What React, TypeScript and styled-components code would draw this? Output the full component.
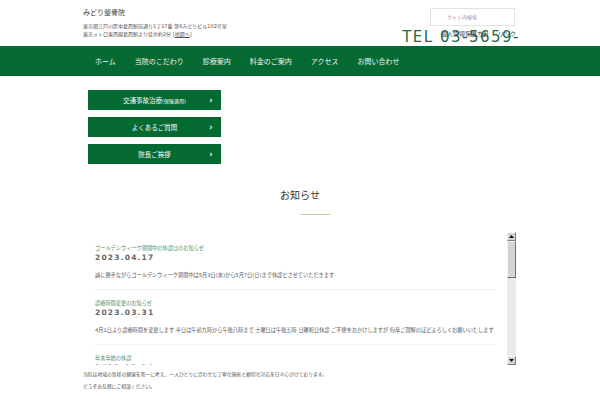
import React from "react";
import styled, { createGlobalStyle } from "styled-components";

const GREEN = "#056932";

const GlobalStyle = createGlobalStyle`
  html, body {
    margin: 0;
    padding: 0;
    background: #ffffff;
  }
  body {
    font-family: "DejaVu Sans", "Noto Sans CJK JP", sans-serif;
    color: #555;
  }
  * {
    box-sizing: border-box;
  }
`;

const Page = styled.div`
  width: 600px;
  height: 400px;
  overflow: hidden;
`;

const Container = styled.div`
  width: 434px;
  margin: 0 auto;
`;

const Header = styled(Container)`
  height: 46px;
  display: flex;
  justify-content: space-between;
`;

const Brand = styled.div`
  padding-top: 9px;
`;

const SiteName = styled.h1`
  margin: 0;
  font-size: 7px;
  line-height: 8px;
  font-weight: normal;
  color: #444;
`;

const Address = styled.p`
  margin: 5px 0 0;
  font-size: 5px;
  line-height: 8px;
  color: #555;

  a {
    color: #555;
    text-decoration: underline;
  }
`;

const HeaderRight = styled.div`
  display: flex;
  flex-direction: column;
  align-items: flex-end;
  padding-top: 8px;
`;

const SearchInput = styled.input`
  width: 85px;
  height: 18px;
  margin-right: 2px;
  border: 1px solid #e3e3e3;
  padding: 0 0 0 16px;
  font-family: inherit;
  font-size: 5px;
  outline: none;

  &::placeholder {
    color: #999;
  }
`;

const TelBlock = styled.div`
  position: relative;
  margin-top: 4px;
  margin-right: -3px;
`;

const Tel = styled.div`
  font-size: 15px;
  line-height: 15px;
  letter-spacing: 1.5px;
  color: #1f6a45;
`;

const HeaderLinks = styled.div`
  position: absolute;
  right: 4px;
  top: 1px;
  display: flex;
  gap: 9px;
  font-size: 6px;
  line-height: 6px;
  color: #444;
`;

const NavBar = styled.nav`
  height: 30px;
  background: ${GREEN};
`;

const NavList = styled(Container)`
  height: 100%;
  display: flex;
  align-items: center;
  gap: 19px;
  padding-left: 12px;
`;

const NavItem = styled.span`
  font-size: 7px;
  color: #f2f2f2;
`;

const ButtonList = styled.div`
  display: flex;
  flex-direction: column;
  gap: 7px;
  padding: 14px 0 0 5px;
`;

const SideButton = styled.div`
  width: 133px;
  height: 20px;
  background: ${GREEN};
  color: #fff;
  display: grid;
  grid-template-columns: 20px 1fr 20px;
  align-items: center;
  font-size: 6.5px;
`;

const ButtonLabel = styled.span`
  text-align: center;

  small {
    font-size: 5px;
  }
`;

const Chevron = styled.span`
  text-align: center;
  font-size: 8px;
  font-weight: bold;
`;

const SectionHead = styled.div`
  display: flex;
  flex-direction: column;
  align-items: center;
  margin-top: 25px;
`;

const SectionTitle = styled.h2`
  margin: 0;
  font-size: 10px;
  line-height: 14px;
  font-weight: normal;
  color: #333;
`;

const TitleRule = styled.div`
  width: 30px;
  height: 1px;
  margin: 11px 0 0 30px;
  background: #cdc8a4;
`;

const NewsBox = styled.div`
  margin: 17px 0 0 5px;
  width: 428px;
  height: 133px;
  display: flex;
`;

const NewsList = styled.div`
  flex: 1;
  overflow: hidden;
  padding-top: 3px;
`;

const ScrollBar = styled.div`
  width: 9px;
  display: flex;
  flex-direction: column;
  background: #ebebe6;
`;

const ScrollButton = styled.div`
  height: 9px;
  display: flex;
  align-items: center;
  justify-content: center;
  background: #d7d4cf;
  border: 1px solid #7d7d7d;
  border-top-color: #f6f6f6;
  border-left-color: #f6f6f6;
`;

const ScrollThumb = styled.div`
  height: 37px;
  background: #d7d4cf;
  border: 1px solid #6f6f6f;
  border-top-color: #f6f6f6;
  border-left-color: #f6f6f6;
`;

const ScrollTrack = styled.div`
  flex: 1;
`;

const NewsItem = styled.div`
  margin: 0 11px 0 7px;
  padding: 8px 0 9px;
  border-bottom: 1px solid #f0f0f0;
`;

const NewsTitle = styled.div`
  font-size: 5.2px;
  line-height: 10px;
  color: #4a8a68;
`;

const NewsDate = styled.div`
  font-size: 7.5px;
  line-height: 10px;
  font-weight: bold;
  letter-spacing: 1.2px;
  color: #666;
`;

const NewsBody = styled.div`
  margin-top: 7px;
  font-size: 5.2px;
  line-height: 10px;
  white-space: nowrap;
  overflow: hidden;
  color: #555;
`;

const Footer = styled(Container)`
  margin-top: 4px;
  font-size: 4.8px;
  line-height: 12px;
  color: #555;
`;

const Arrow = ({ down }: { down?: boolean }) => (
  <svg width="5" height="3" viewBox="0 0 5 3">
    <polygon points={down ? "0,0 5,0 2.5,3" : "0,3 5,3 2.5,0"} fill="#111" />
  </svg>
);

const navItems = [
  "ホーム",
  "当院のこだわり",
  "診療案内",
  "料金のご案内",
  "アクセス",
  "お問い合わせ",
];

const news = [
  {
    title: "ゴールデンウィーク期間中の休診日のお知らせ",
    date: "2023.04.17",
    body: "誠に勝手ながらゴールデンウィーク期間中は5月3日(水)から5月7日(日)まで休診とさせていただきます",
  },
  {
    title: "診療時間変更のお知らせ",
    date: "2023.03.31",
    body: "4月1日より診療時間を変更します 平日は午前九時から午後八時まで 土曜日は午後五時 日曜祝日休診 ご不便をおかけしますが 何卒ご理解のほどよろしくお願いいたします",
  },
  {
    title: "年末年始の休診",
    date: "2022.12.20",
    body: "12月29日(木)から1月3日(火)まで休診とさせていただきます",
  },
];

export default function App() {
  return (
    <Page>
      <GlobalStyle />
      <Header>
        <Brand>
          <SiteName>みどり整骨院</SiteName>
          <Address>
            東京都江戸川区中葛西駅前通り1丁17番 第6みどりビル102号室
            <br />
            東京メトロ東西線葛西駅より徒歩約2分 [<a href="#">地図へ</a>]
          </Address>
        </Brand>
        <HeaderRight>
          <SearchInput placeholder="サイト内検索" />
          <TelBlock>
            <Tel>TEL 03-5659-</Tel>
            <HeaderLinks>
              <span>個人情報保護方針</span>
              <span>リンク</span>
            </HeaderLinks>
          </TelBlock>
        </HeaderRight>
      </Header>

      <NavBar>
        <NavList>
          {navItems.map((item) => (
            <NavItem key={item}>{item}</NavItem>
          ))}
        </NavList>
      </NavBar>

      <Container>
        <ButtonList>
          <SideButton>
            <span />
            <ButtonLabel>
              交通事故治療<small>(保険適用)</small>
            </ButtonLabel>
            <Chevron>›</Chevron>
          </SideButton>
          <SideButton>
            <span />
            <ButtonLabel>よくあるご質問</ButtonLabel>
            <Chevron>›</Chevron>
          </SideButton>
          <SideButton>
            <span />
            <ButtonLabel>院長ご挨拶</ButtonLabel>
            <Chevron>›</Chevron>
          </SideButton>
        </ButtonList>

        <SectionHead>
          <SectionTitle>お知らせ</SectionTitle>
          <TitleRule />
        </SectionHead>

        <NewsBox>
          <NewsList>
            {news.map((n) => (
              <NewsItem key={n.date}>
                <NewsTitle>{n.title}</NewsTitle>
                <NewsDate>{n.date}</NewsDate>
                <NewsBody>{n.body}</NewsBody>
              </NewsItem>
            ))}
          </NewsList>
          <ScrollBar>
            <ScrollButton>
              <Arrow />
            </ScrollButton>
            <ScrollThumb />
            <ScrollTrack />
            <ScrollButton>
              <Arrow down />
            </ScrollButton>
          </ScrollBar>
        </NewsBox>
      </Container>

      <Footer>
        当院は地域の皆様の健康を第一に考え、一人ひとりに合わせた丁寧な施術と親切な対応を日々心がけております。
        <br />
        どうぞお気軽にご相談ください。
      </Footer>
    </Page>
  );
}
